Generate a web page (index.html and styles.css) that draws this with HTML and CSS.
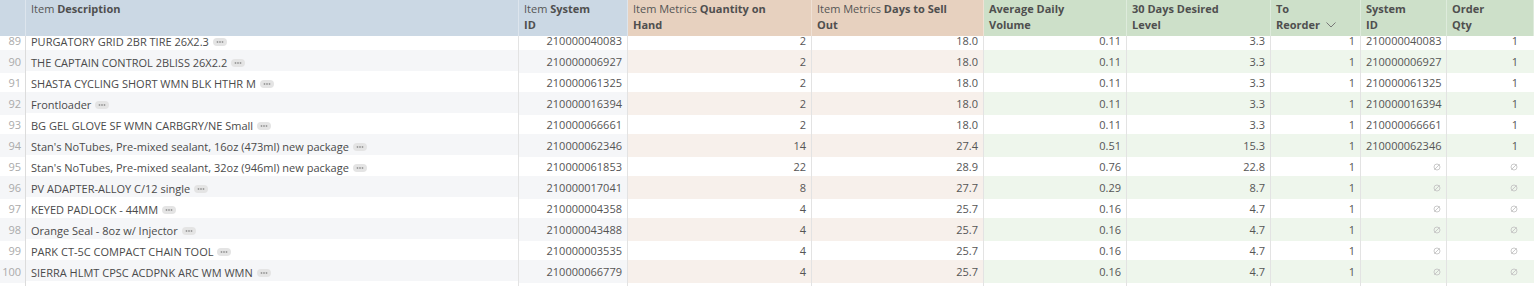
FILE: index.html
```html
<!DOCTYPE html>
<html>
<head>
<meta charset="utf-8">
<link rel="stylesheet" href="styles.css">
</head>
<body>
<div class="table">
  <div class="row head">
    <div class="c num b"></div>
    <div class="c desc b"><span>Item <strong>Description</strong></span></div>
    <div class="c b"><span>Item <strong>System</strong><br><strong>ID</strong></span></div>
    <div class="c p"><span>Item Metrics <strong>Quantity on</strong><br><strong>Hand</strong></span></div>
    <div class="c p"><span>Item Metrics <strong>Days to Sell</strong><br><strong>Out</strong></span></div>
    <div class="c g"><strong>Average Daily<br>Volume</strong></div>
    <div class="c g"><strong>30 Days Desired<br>Level</strong></div>
    <div class="c g"><strong>To<br>Reorder</strong> <svg class="chev" width="10" height="6" viewBox="0 0 10 6"><path d="M0.5 0.5 L5 5 L9.5 0.5" fill="none" stroke="#777" stroke-width="1"/></svg></div>
    <div class="c g"><strong>System<br>ID</strong></div>
    <div class="c g last"><strong>Order<br>Qty</strong></div>
  </div>
  <div class="body">
    <div class="rows" id="rows"></div>
  </div>
</div>
<script src="app.js"></script>
</body>
</html>
```
FILE: app.js
```js
const data = [
  [89,"PURGATORY GRID 2BR TIRE 26X2.3","210000040083","2","18.0","0.11","3.3","1","210000040083","1"],
  [90,"THE CAPTAIN CONTROL 2BLISS 26X2.2","210000006927","2","18.0","0.11","3.3","1","210000006927","1"],
  [91,"SHASTA CYCLING SHORT WMN BLK HTHR M","210000061325","2","18.0","0.11","3.3","1","210000061325","1"],
  [92,"Frontloader","210000016394","2","18.0","0.11","3.3","1","210000016394","1"],
  [93,"BG GEL GLOVE SF WMN CARBGRY/NE Small","210000066661","2","18.0","0.11","3.3","1","210000066661","1"],
  [94,"Stan's NoTubes, Pre-mixed sealant, 16oz (473ml) new package","210000062346","14","27.4","0.51","15.3","1","210000062346","1"],
  [95,"Stan's NoTubes, Pre-mixed sealant, 32oz (946ml) new package","210000061853","22","28.9","0.76","22.8","1",null,null],
  [96,"PV ADAPTER-ALLOY C/12 single","210000017041","8","27.7","0.29","8.7","1",null,null],
  [97,"KEYED PADLOCK - 44MM","210000004358","4","25.7","0.16","4.7","1",null,null],
  [98,"Orange Seal - 8oz w/ Injector","210000043488","4","25.7","0.16","4.7","1",null,null],
  [99,"PARK CT-5C COMPACT CHAIN TOOL","210000003535","4","25.7","0.16","4.7","1",null,null],
  [100,"SIERRA HLMT CPSC ACDPNK ARC WM WMN","210000066779","4","25.7","0.16","4.7","1",null,null],
  ["","","","","","","","","",""]
];
const pill = '<svg class="pill" width="14" height="8" viewBox="0 0 14 8"><rect x="0" y="0" width="14" height="8" rx="4" fill="#e4e4e4"/><circle cx="4.5" cy="4" r="0.9" fill="#9a9a9a"/><circle cx="7" cy="4" r="0.9" fill="#9a9a9a"/><circle cx="9.5" cy="4" r="0.9" fill="#9a9a9a"/></svg>';
const nul = '<svg class="nul" width="8" height="8" viewBox="0 0 8 8"><circle cx="4" cy="4" r="3" fill="none" stroke="#c4c4c4" stroke-width="0.9"/><path d="M1.3 6.7 L6.7 1.3" stroke="#c4c4c4" stroke-width="0.9"/></svg>';
const groups = ["b","b","p","p","g","g","g","g","g"];
const rows = document.getElementById("rows");
data.forEach((d, i) => {
  const r = document.createElement("div");
  r.className = "row" + (typeof d[0] === "number" && d[0] % 2 === 0 ? " alt" : "");
  let h = '<div class="c num">' + d[0] + '</div>';
  h += '<div class="c desc b">' + (d[1] ? '<span class="txt">' + d[1] + '</span>' + pill : '') + '</div>';
  for (let k = 2; k < 10; k++) {
    const v = d[k] === null ? nul : d[k];
    h += '<div class="c r ' + groups[k-1] + (k === 9 ? ' last' : '') + '">' + v + '</div>';
  }
  r.innerHTML = h;
  rows.appendChild(r);
});
```
FILE: styles.css
```css
html, body {
  margin: 0;
  padding: 0;
  background: #fff;
}
body {
  font-family: "Open Sans", "DejaVu Sans", sans-serif;
  font-size: 11px;
  color: #4a4a4a;
  width: 1534px;
  height: 286px;
  overflow: hidden;
}
.table {
  width: 1534px;
}
.row {
  display: grid;
  grid-template-columns: 26px 493px 109px 184px 172px 143px 144px 90px 86px 87px;
}
.head {
  height: 36px;
  position: relative;
  z-index: 2;
  color: #555;
}
.head .c {
  line-height: 16px;
  padding: 1px 5px 0 5px;
  border-right: 1px solid rgba(255,255,255,0.35);
  white-space: nowrap;
}
.head .c.b { background: #cbd8e4; }
.head .c.p { background: #e7d1bf; }
.head .c.g { background: #cde0c9; }
.head strong { font-weight: 700; color: #4f4f4f; }
.chev { margin-left: 3px; vertical-align: 1px; }
.body {
  height: 250px;
  overflow: hidden;
}
.rows {
  margin-top: -7px;
}
.rows .row {
  height: 21px;
}
.rows .c {
  height: 21px;
  line-height: 19px;
  padding-top: 2px;
  border-right: 1px solid #e3e3e3;
  white-space: nowrap;
  overflow: hidden;
  padding-left: 5px;
  padding-right: 5px;
}
.rows .c.r { text-align: right; color: #555; }
.rows .c.num {
  text-align: right;
  color: #aaa;
  padding: 2px 4px 0 0;
  border-right: 1px solid #dcdcdc;
}
.rows .c.desc {
  display: flex;
  align-items: center;
  padding-top: 0;
  padding-left: 5px;
}
.rows .c.desc .txt { padding-top: 3px; line-height: 19px; }
.pill { margin-left: 4px; margin-top: 4px; flex: none; }
.rows .c.last { padding-right: 16px; border-right: none; }
.rows .row.alt .c.num,
.rows .row.alt .c.b { background: #f5f6f8; }
.rows .row.alt .c.p { background: #f7f0eb; }
.rows .row.alt .c.g { background: #eef6ec; }
```
